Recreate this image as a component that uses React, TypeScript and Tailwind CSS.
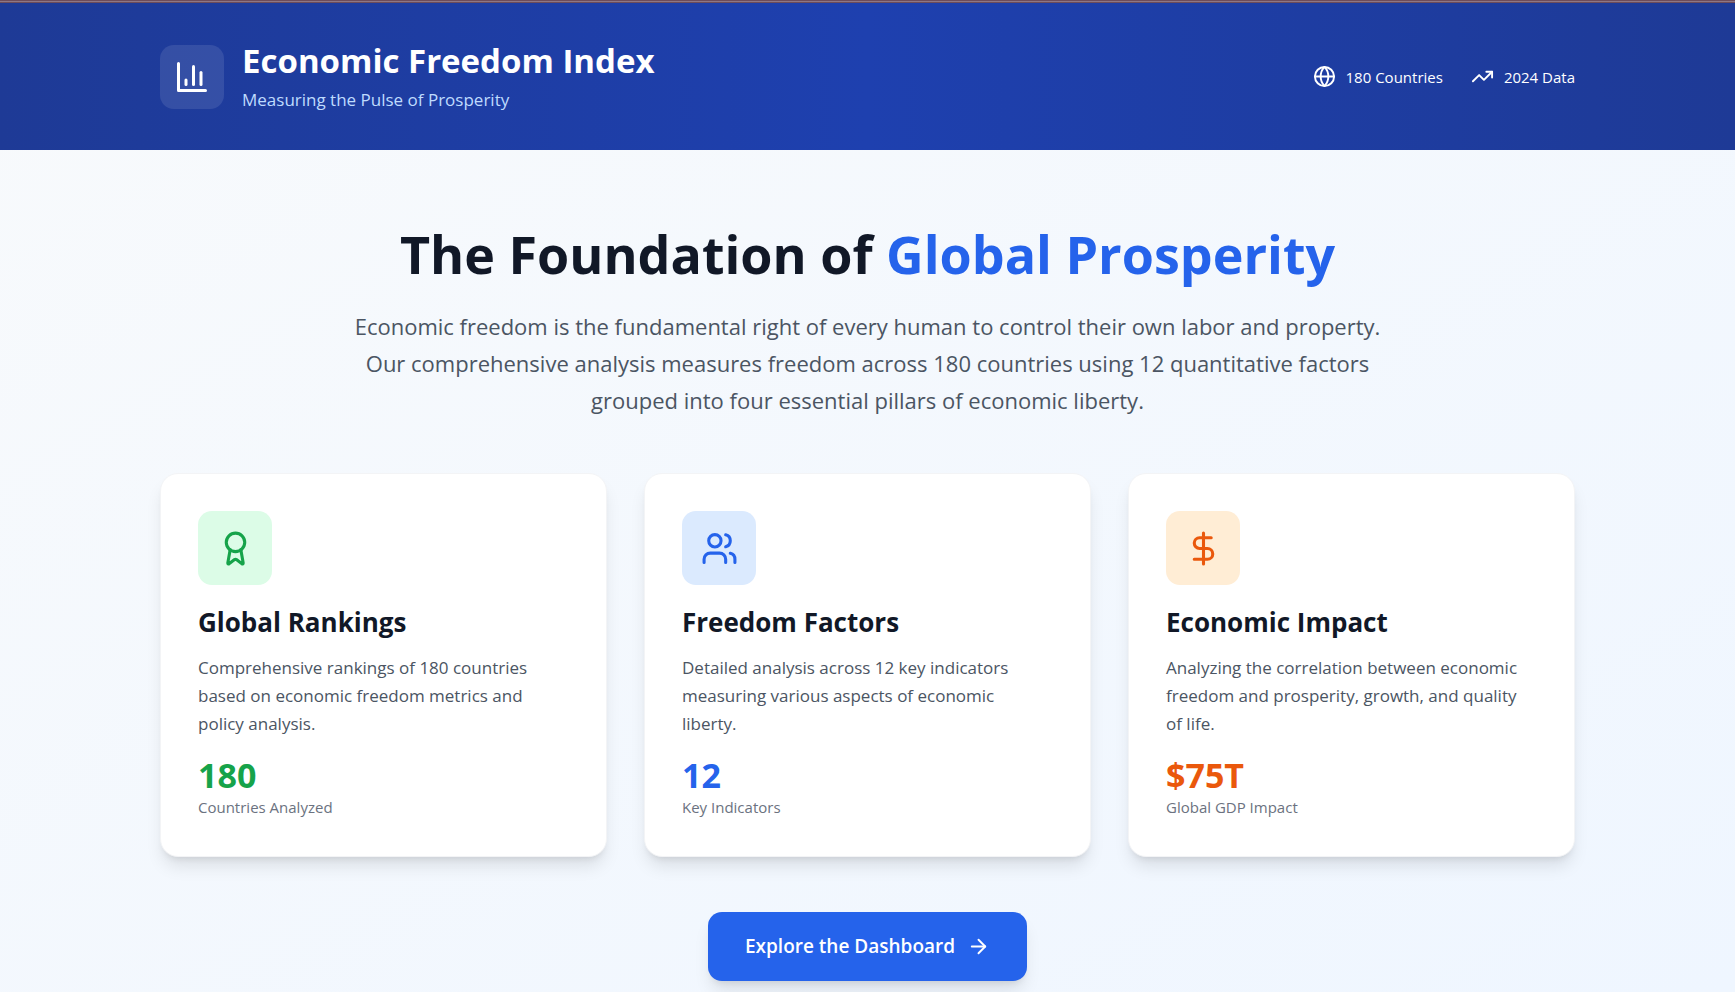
import type { ReactNode } from "react";
import { ArrowRight, Award, DollarSign, Globe, TrendingUp, Users } from "lucide-react";

type Feature = {
  title: string;
  text: string;
  value: string;
  label: string;
  icon: ReactNode;
  tile: string;
  accent: string;
};

const features: Feature[] = [
  {
    title: "Global Rankings",
    text: "Comprehensive rankings of 180 countries based on economic freedom metrics and policy analysis.",
    value: "180",
    label: "Countries Analyzed",
    icon: <Award size={37} />,
    tile: "bg-[#dcfce7]",
    accent: "text-[#16a34a]",
  },
  {
    title: "Freedom Factors",
    text: "Detailed analysis across 12 key indicators measuring various aspects of economic liberty.",
    value: "12",
    label: "Key Indicators",
    icon: <Users size={37} />,
    tile: "bg-[#dbeafe]",
    accent: "text-[#2563eb]",
  },
  {
    title: "Economic Impact",
    text: "Analyzing the correlation between economic freedom and prosperity, growth, and quality of life.",
    value: "$75T",
    label: "Global GDP Impact",
    icon: <DollarSign size={37} />,
    tile: "bg-[#ffedd5]",
    accent: "text-[#ea580c]",
  },
];

function ChartIcon() {
  return (
    <svg
      viewBox="0 0 24 24"
      className="size-9"
      fill="none"
      stroke="currentColor"
      strokeWidth="2"
      strokeLinecap="round"
      strokeLinejoin="round"
      aria-hidden="true"
    >
      <path d="M3 3v18h18" />
      <path d="M18 17V9" />
      <path d="M13 17V5" />
      <path d="M8 17v-3" />
    </svg>
  );
}

function FeatureCard({ title, text, value, label, icon, tile, accent }: Feature) {
  return (
    <article className="rounded-[18px] border border-[#f3f4f6] bg-white p-[37px] shadow-[0_12px_17px_-3px_rgba(0,0,0,0.1),0_5px_7px_-4px_rgba(0,0,0,0.1)]">
      <div className={`mb-[18px] flex size-[74px] items-center justify-center rounded-[14px] ${tile} ${accent}`}>
        {icon}
      </div>
      <h3 className="mb-[13px] text-[26px] leading-[38px] font-bold text-[#111827]">{title}</h3>
      <p className="mb-[17px] pr-2 text-[17px] leading-7 text-[#4b5563]">{text}</p>
      <div className={`text-[34px] leading-[41px] font-bold ${accent}`}>{value}</div>
      <div className="text-[15px] leading-[23px] text-[#6b7280]">{label}</div>
    </article>
  );
}

export default function App() {
  return (
    <div className="min-h-screen bg-linear-to-br from-[#f8fafc] to-[#eff6ff] font-['Open_Sans',sans-serif]">
      <div className="h-[3px] border-y border-[#6e4c5a] bg-[#8f7784]" />
      <header className="bg-linear-to-r from-[#1e3a96] via-[#1e40af] to-[#1e3a96] text-white">
        <div className="mx-auto flex max-w-[1471px] flex-wrap items-center justify-between gap-6 px-7 py-9">
          <div className="flex items-center gap-[18px]">
            <div className="rounded-[14px] bg-white/10 p-[14px]">
              <ChartIcon />
            </div>
            <div>
              <h1 className="text-[33px] leading-[43px] font-bold">Economic Freedom Index</h1>
              <p className="mt-1 text-[17px] leading-7 text-[#bfdbfe]">Measuring the Pulse of Prosperity</p>
            </div>
          </div>
          <ul className="flex gap-7 text-[15px] leading-6">
            <li className="flex items-center gap-[10px]">
              <Globe size={23} />
              180 Countries
            </li>
            <li className="flex items-center gap-[10px]">
              <TrendingUp size={23} />
              2024 Data
            </li>
          </ul>
        </div>
      </header>

      <main className="mx-auto max-w-[1471px] px-7 pt-[74px]">
        <section className="text-center">
          <h2 className="text-[52px] leading-[60px] font-bold text-[#111827]">
            The Foundation of <span className="text-[#2563eb]">Global Prosperity</span>
          </h2>
          <p className="mx-auto mt-6 mb-[54px] max-w-[1034px] text-[22px] leading-[37px] text-[#4b5563]">
            Economic freedom is the fundamental right of every human to control their own labor and property. Our
            comprehensive analysis measures freedom across 180 countries using 12 quantitative factors grouped into four
            essential pillars of economic liberty.
          </p>
        </section>

        <section className="grid gap-[37px] md:grid-cols-3">
          {features.map((feature) => (
            <FeatureCard key={feature.title} {...feature} />
          ))}
        </section>

        <div className="mt-[55px] flex justify-center">
          <button
            type="button"
            className="flex items-center gap-3 rounded-[14px] bg-[#2563eb] px-[37px] py-5 text-[19px] leading-[29px] font-semibold text-white shadow-[0_12px_17px_-3px_rgba(0,0,0,0.1),0_5px_7px_-4px_rgba(0,0,0,0.1)]"
          >
            Explore the Dashboard
            <ArrowRight size={23} />
          </button>
        </div>
      </main>
    </div>
  );
}
